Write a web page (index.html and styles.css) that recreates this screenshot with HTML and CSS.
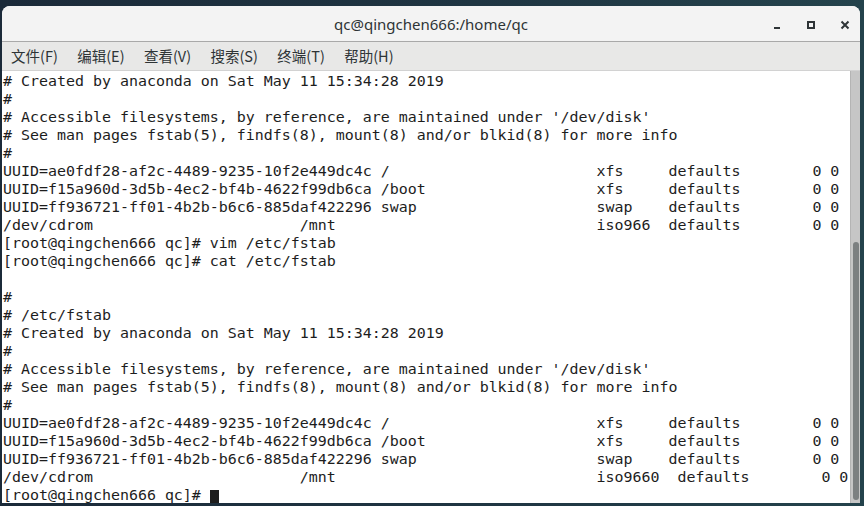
FILE: index.html
```html
<!DOCTYPE html>
<html lang="zh-CN">
<head>
<meta charset="utf-8">
<title>qc@qingchen666:/home/qc</title>
<link rel="stylesheet" href="styles.css">
</head>
<body>
<div class="window">
  <header class="titlebar">
    <div class="title-spacer"></div>
    <div class="title">qc@qingchen666:/home/qc</div>
    <div class="controls">
      <span class="ctl"><svg width="16" height="16" viewBox="0 0 16 16"><rect x="5" y="10" width="6" height="2" fill="#2e3436"/></svg></span>
      <span class="ctl"><svg width="16" height="16" viewBox="0 0 16 16"><rect x="5" y="5" width="6" height="6" fill="none" stroke="#2e3436" stroke-width="2"/></svg></span>
      <span class="ctl"><svg width="16" height="16" viewBox="0 0 16 16"><path d="M4.5 4.5 L11.5 11.5 M11.5 4.5 L4.5 11.5" stroke="#2e3436" stroke-width="2" fill="none"/></svg></span>
    </div>
  </header>
  <nav class="menubar">
    <span class="menu-item">文件(F)</span>
    <span class="menu-item">编辑(E)</span>
    <span class="menu-item">查看(V)</span>
    <span class="menu-item">搜索(S)</span>
    <span class="menu-item">终端(T)</span>
    <span class="menu-item">帮助(H)</span>
  </nav>
  <main class="terminal">
<pre class="screen"># Created by anaconda on Sat May 11 15:34:28 2019
#
# Accessible filesystems, by reference, are maintained under '/dev/disk'
# See man pages fstab(5), findfs(8), mount(8) and/or blkid(8) for more info
#
UUID=ae0fdf28-af2c-4489-9235-10f2e449dc4c /                       xfs     defaults        0 0
UUID=f15a960d-3d5b-4ec2-bf4b-4622f99db6ca /boot                   xfs     defaults        0 0
UUID=ff936721-ff01-4b2b-b6c6-885daf422296 swap                    swap    defaults        0 0
/dev/cdrom                       /mnt                             iso966  defaults        0 0
[root@qingchen666 qc]# vim /etc/fstab
[root@qingchen666 qc]# cat /etc/fstab

#
# /etc/fstab
# Created by anaconda on Sat May 11 15:34:28 2019
#
# Accessible filesystems, by reference, are maintained under '/dev/disk'
# See man pages fstab(5), findfs(8), mount(8) and/or blkid(8) for more info
#
UUID=ae0fdf28-af2c-4489-9235-10f2e449dc4c /                       xfs     defaults        0 0
UUID=f15a960d-3d5b-4ec2-bf4b-4622f99db6ca /boot                   xfs     defaults        0 0
UUID=ff936721-ff01-4b2b-b6c6-885daf422296 swap                    swap    defaults        0 0
/dev/cdrom                       /mnt                             iso9660  defaults        0 0
[root@qingchen666 qc]# <span class="cursor"> </span></pre>
    <div class="scrollbar"><div class="thumb"></div></div>
  </main>
</div>
</body>
</html>
```
FILE: styles.css
```css
html, body {
  margin: 0;
  padding: 0;
}
body {
  width: 864px;
  height: 506px;
  overflow: hidden;
  background: linear-gradient(90deg, #1b2a39 0%, #1f3542 55%, #24434c 100%);
  padding: 6px 4px 3px 2px;
  box-sizing: border-box;
}
.window {
  width: 858px;
  height: 497px;
  display: flex;
  flex-direction: column;
  border-radius: 8px 8px 0 0;
  overflow: hidden;
  background: #ffffff;
}
.titlebar {
  height: 35px;
  flex: 0 0 35px;
  background: #f3f3f3;
  border-bottom: 1px solid #a9a9a9;
  display: grid;
  grid-template-columns: 1fr auto 1fr;
  align-items: center;
}
.title {
  font-family: "Noto Sans", "Open Sans", sans-serif;
  font-size: 15px;
  color: #2e3436;
  padding-top: 1px;
}
.controls {
  display: flex;
  justify-content: flex-end;
  gap: 4px;
}
.ctl {
  width: 30px;
  height: 16px;
  display: flex;
  justify-content: center;
  align-items: center;
  padding-top: 2px;
}
.menubar {
  height: 29px;
  flex: 0 0 29px;
  background: #e8e8e7;
  border-bottom: 1px solid #d2d2d2;
  display: flex;
  align-items: center;
  padding-left: 9px;
  gap: 19.4px;
  box-sizing: border-box;
}
.menu-item {
  font-family: "Noto Sans CJK SC", "Noto Sans", sans-serif;
  font-size: 14.5px;
  color: #2e3436;
  line-height: 20px;
}
.terminal {
  flex: 1;
  display: flex;
  min-height: 0;
  background: #ffffff;
}
.screen {
  flex: 1;
  margin: 0;
  padding: 1px 0 0 1px;
  font-family: "DejaVu Sans Mono", "Liberation Mono", monospace;
  font-size: 14.95px;
  line-height: 18px;
  color: #1d1d1d;
  white-space: pre;
  overflow: hidden;
}
.cursor {
  display: inline-block;
  width: 9px;
  height: 17px;
  vertical-align: -4px;
  background: #1d1d1d;
}
.scrollbar {
  width: 10px;
  flex: 0 0 10px;
  background: #c6c6c6;
  border-left: 1px solid #b4b4b4;
  box-sizing: border-box;
  display: flex;
  flex-direction: column;
  align-items: center;
  padding-top: 171px;
  padding-bottom: 3px;
}
.thumb {
  width: 6px;
  flex: 1;
  background: #7c8081;
  border-radius: 3px;
}
```
